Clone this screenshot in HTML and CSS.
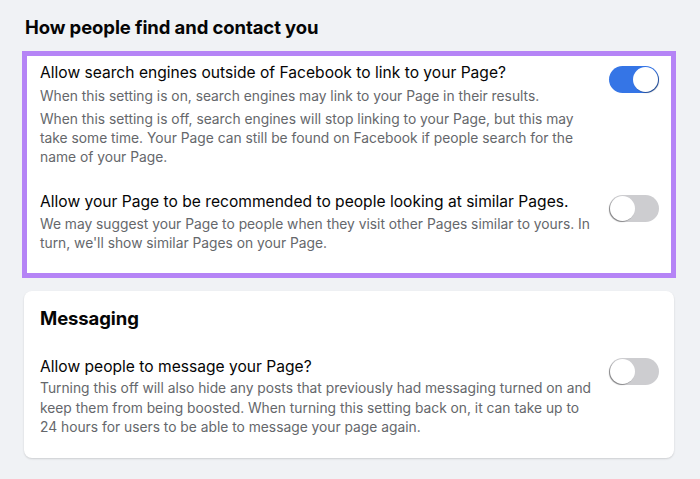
FILE: index.html
```html
<!DOCTYPE html>
<html>
<head>
<meta charset="utf-8">
<link rel="stylesheet" href="styles.css">
</head>
<body>
<div class="page">
  <h2 class="section-title">How people find and contact you</h2>
  <div class="highlight">
    <div class="setting">
      <div class="setting-text">
        <div class="setting-title">Allow search engines outside of Facebook to link to your Page?</div>
        <p class="desc">When this setting is on, search engines may link to your Page in their results.</p>
        <p class="desc">When this setting is off, search engines will stop linking to your Page, but this may take some time. Your Page can still be found on Facebook if people search for the name of your Page.</p>
      </div>
      <div class="toggle on"><span class="knob"></span></div>
    </div>
    <div class="setting second">
      <div class="setting-text">
        <div class="setting-title">Allow your Page to be recommended to people looking at similar Pages.</div>
        <p class="desc">We may suggest your Page to people when they visit other Pages similar to yours. In turn, we'll show similar Pages on your Page.</p>
      </div>
      <div class="toggle"><span class="knob"></span></div>
    </div>
  </div>

  <div class="card">
    <h2 class="card-title">Messaging</h2>
    <div class="setting msg">
      <div class="setting-text">
        <div class="setting-title">Allow people to message your Page?</div>
        <p class="desc">Turning this off will also hide any posts that previously had messaging turned on and keep them from being boosted. When turning this setting back on, it can take up to 24 hours for users to be able to message your page again.</p>
      </div>
      <div class="toggle"><span class="knob"></span></div>
    </div>
  </div>
</div>
</body>
</html>
```

FILE: styles.css
```css
* { box-sizing: border-box; }
html, body {
  margin: 0;
  padding: 0;
  background: #f0f2f5;
  font-family: Inter, "Liberation Sans", Arial, sans-serif;
  color: #050505;
}
.page {
  width: 700px;
  height: 479px;
  overflow: hidden;
  padding: 14px 0 0 0;
}
.section-title {
  margin: 0 0 0 25px;
  font-size: 18.5px;
  font-weight: 700;
  line-height: 26px;
  letter-spacing: -0.1px;
}
.highlight {
  margin: 11px 0 0 22px;
  width: 654px;
  height: 227px;
  border: 5px solid #b584f6;
  background: #fff;
  padding: 7px 12px 0 13px;
}
.setting {
  display: flex;
  justify-content: space-between;
  align-items: flex-start;
}
.setting.second {
  margin-top: 25px;
}
.setting-text {
  width: 556px;
}
.setting-title {
  font-size: 15.6px;
  line-height: 20px;
  color: #050505;
}
.desc {
  margin: 3.5px 0 0 0;
  font-size: 13.8px;
  line-height: 19px;
  color: #65676b;
}
.desc + .desc {
  margin-top: 4px;
}
.toggle {
  flex: none;
  width: 50px;
  height: 27px;
  border-radius: 14px;
  background: #cdcdd0;
  padding: 1px;
  margin-top: 3px;
  display: flex;
}
.toggle .knob {
  width: 25px;
  height: 25px;
  border-radius: 50%;
  background: #fff;
  box-shadow: -1px 1px 1px rgba(0,0,0,0.35);
}
.toggle.on {
  background: #3575e6;
  justify-content: flex-end;
}
.toggle.on .knob {
  box-shadow: 1px 1px 1px rgba(0,0,0,0.35);
}
.card {
  margin: 13px 0 0 24px;
  width: 650px;
  height: 167px;
  background: #fff;
  border-radius: 8px;
  box-shadow: 0 1px 2px rgba(0,0,0,0.15);
  padding: 14px 15px 0 16px;
}
.card-title {
  margin: 0;
  font-size: 18.5px;
  font-weight: 700;
  line-height: 26px;
  letter-spacing: -0.1px;
}
.setting.msg {
  margin-top: 26px;
}
.setting.msg .toggle {
  margin-top: 1px;
}
.setting.msg .desc {
  margin-top: 2px;
  line-height: 19.5px;
}
```
